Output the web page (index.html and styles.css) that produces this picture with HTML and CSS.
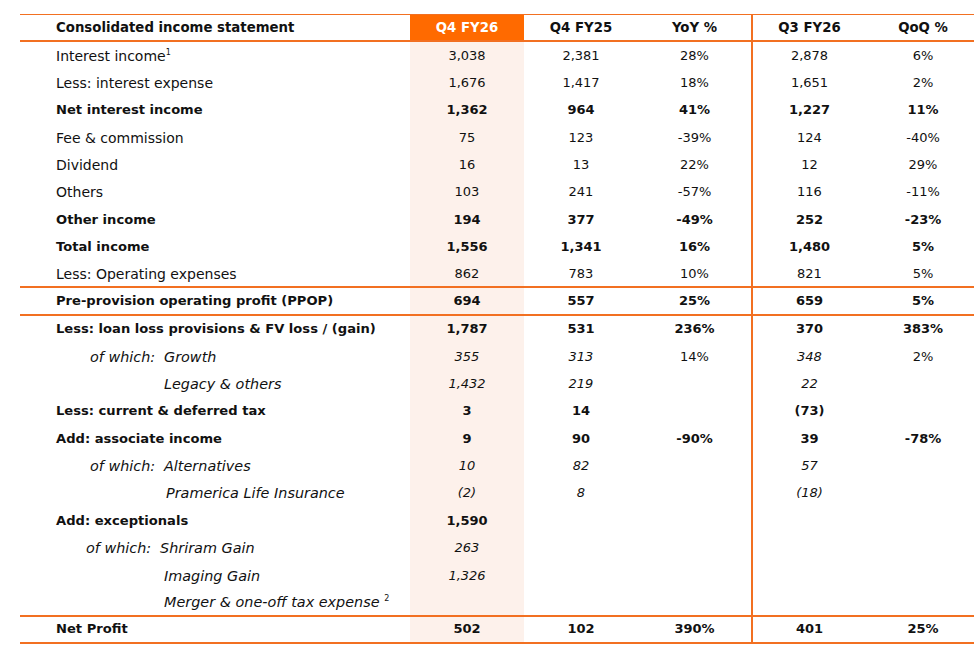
FILE: index.html
```html
<!DOCTYPE html>
<html lang="en">
<head>
<meta charset="utf-8">
<title>Consolidated income statement</title>
<link rel="stylesheet" href="styles.css">
</head>
<body>
<table class="fin">
  <colgroup>
    <col class="c-label"><col class="c-num"><col class="c-num"><col class="c-num"><col class="c-num"><col class="c-num">
  </colgroup>
  <thead>
    <tr class="head">
      <th class="lbl">Consolidated income statement</th>
      <th class="hi-head">Q4 FY26</th>
      <th>Q4 FY25</th>
      <th>YoY %</th>
      <th class="div">Q3 FY26</th>
      <th>QoQ %</th>
    </tr>
  </thead>
  <tbody>
    <tr><td class="lbl">Interest income<sup class="fn">1</sup></td><td class="hi">3,038</td><td>2,381</td><td>28%</td><td class="div">2,878</td><td>6%</td></tr>
    <tr><td class="lbl">Less: interest expense</td><td class="hi">1,676</td><td>1,417</td><td>18%</td><td class="div">1,651</td><td>2%</td></tr>
    <tr class="b"><td class="lbl">Net interest income</td><td class="hi">1,362</td><td>964</td><td>41%</td><td class="div">1,227</td><td>11%</td></tr>
    <tr><td class="lbl">Fee &amp; commission</td><td class="hi">75</td><td>123</td><td>-39%</td><td class="div">124</td><td>-40%</td></tr>
    <tr><td class="lbl">Dividend</td><td class="hi">16</td><td>13</td><td>22%</td><td class="div">12</td><td>29%</td></tr>
    <tr><td class="lbl">Others</td><td class="hi">103</td><td>241</td><td>-57%</td><td class="div">116</td><td>-11%</td></tr>
    <tr class="b"><td class="lbl">Other income</td><td class="hi">194</td><td>377</td><td>-49%</td><td class="div">252</td><td>-23%</td></tr>
    <tr class="b"><td class="lbl">Total income</td><td class="hi">1,556</td><td>1,341</td><td>16%</td><td class="div">1,480</td><td>5%</td></tr>
    <tr class="rule-below"><td class="lbl">Less: Operating expenses</td><td class="hi">862</td><td>783</td><td>10%</td><td class="div">821</td><td>5%</td></tr>
    <tr class="b rule-below"><td class="lbl">Pre-provision operating profit (PPOP)</td><td class="hi">694</td><td>557</td><td>25%</td><td class="div">659</td><td>5%</td></tr>
    <tr class="b"><td class="lbl">Less: loan loss provisions &amp; FV loss / (gain)</td><td class="hi">1,787</td><td>531</td><td>236%</td><td class="div">370</td><td>383%</td></tr>
    <tr class="i"><td class="lbl"><span class="ow">of which:</span><span class="sub">Growth</span></td><td class="hi">355</td><td>313</td><td class="up">14%</td><td class="div">348</td><td class="up">2%</td></tr>
    <tr class="i"><td class="lbl"><span class="ow"></span><span class="sub">Legacy &amp; others</span></td><td class="hi">1,432</td><td>219</td><td></td><td class="div">22</td><td></td></tr>
    <tr class="b"><td class="lbl">Less: current &amp; deferred tax</td><td class="hi">3</td><td>14</td><td></td><td class="div">(73)</td><td></td></tr>
    <tr class="b"><td class="lbl">Add: associate income</td><td class="hi">9</td><td>90</td><td>-90%</td><td class="div">39</td><td>-78%</td></tr>
    <tr class="i"><td class="lbl"><span class="ow">of which:</span><span class="sub">Alternatives</span></td><td class="hi">10</td><td>82</td><td></td><td class="div">57</td><td></td></tr>
    <tr class="i"><td class="lbl"><span class="ow"></span><span class="sub s2">Pramerica Life Insurance</span></td><td class="hi">(2)</td><td>8</td><td></td><td class="div">(18)</td><td></td></tr>
    <tr class="b"><td class="lbl">Add: exceptionals</td><td class="hi">1,590</td><td></td><td></td><td class="div"></td><td></td></tr>
    <tr class="i"><td class="lbl"><span class="ow ow2">of which:</span><span class="sub">Shriram Gain</span></td><td class="hi">263</td><td></td><td></td><td class="div"></td><td></td></tr>
    <tr class="i"><td class="lbl"><span class="ow"></span><span class="sub">Imaging Gain</span></td><td class="hi">1,326</td><td></td><td></td><td class="div"></td><td></td></tr>
    <tr class="i rule-below"><td class="lbl"><span class="ow"></span><span class="sub">Merger &amp; one-off tax expense <sup class="fn">2</sup></span></td><td class="hi"></td><td></td><td></td><td class="div"></td><td></td></tr>
    <tr class="b last"><td class="lbl">Net Profit</td><td class="hi">502</td><td>102</td><td>390%</td><td class="div">401</td><td>25%</td></tr>
  </tbody>
</table>
</body>
</html>
```

FILE: styles.css
```css
html, body {
  margin: 0;
  padding: 0;
  background: #ffffff;
  overflow: hidden;
}

body {
  font-family: "DejaVu Sans", "Noto Sans", sans-serif;
  color: #111111;
  width: 974px;
  height: 648px;
}

.fin {
  margin: 14px 0 0 20px;
  border-collapse: collapse;
  table-layout: fixed;
  width: 960px;
  font-size: 13px;
}

.c-label { width: 390px; }
.c-num { width: 114px; }

.fin th,
.fin td {
  padding: 0;
  text-align: center;
  vertical-align: middle;
  height: 27.37px;
  line-height: 16px;
  white-space: nowrap;
}

.fin th {
  font-weight: bold;
  font-size: 13.3px;
  height: 25px;
  border-top: 1px solid #f27021;
  border-bottom: 2px solid #f27021;
}

.fin .lbl {
  text-align: left;
  padding-left: 36px;
  font-size: 14px;
}

.fin th.lbl {
  font-size: 13.3px;
}

.b td.lbl {
  font-size: 13.1px;
}

.i td.lbl {
  font-size: 14.4px;
}

.hi-head {
  background: #ff6a00;
  color: #ffffff;
}

.hi {
  background: #fdf1eb;
}

.div {
  border-left: 2px solid #f27021;
}

.b td {
  font-weight: bold;
}

.i td {
  font-style: italic;
}

.i td.up {
  font-style: normal;
}

.rule-below td {
  height: 25.37px;
  border-bottom: 2px solid #f27021;
}

.last td {
  height: 25px;
  border-bottom: 2px solid #f27021;
}

.ow {
  display: inline-block;
  width: 74px;
  margin-left: 34px;
}

.ow2 {
  margin-left: 30px;
}

.sub.s2 {
  margin-left: 2px;
}

.fn {
  font-size: 8px;
  font-style: normal;
  vertical-align: 6px;
  line-height: 0;
}
```
